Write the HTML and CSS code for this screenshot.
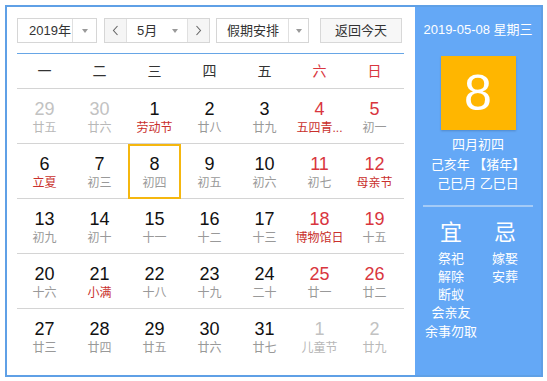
FILE: index.html
```html
<!DOCTYPE html>
<html lang="zh-CN">
<head>
<meta charset="utf-8">
<title>日历</title>
<link rel="stylesheet" href="styles.css">
</head>
<body>
<div class="cal">
  <div class="main">
    <div class="toolbar">
      <div class="select year">
        <span class="sel-text">2019年</span>
        <span class="sel-arrow"><i class="caret"></i></span>
      </div>
      <div class="month-group">
        <span class="nav nav-prev"><svg width="7" height="11" viewBox="0 0 7 11"><path d="M5.5 1 L1.5 5.5 L5.5 10" fill="none" stroke="#666" stroke-width="1.1"/></svg></span>
        <span class="m-text">5月</span>
        <span class="m-arrow"><i class="caret"></i></span>
        <span class="nav nav-next"><svg width="7" height="11" viewBox="0 0 7 11"><path d="M1.5 1 L5.5 5.5 L1.5 10" fill="none" stroke="#666" stroke-width="1.1"/></svg></span>
      </div>
      <div class="select holiday">
        <span class="sel-text">假期安排</span>
        <span class="sel-arrow"><i class="caret"></i></span>
      </div>
      <button class="today">返回今天</button>
    </div>

    <div class="weekdays">
      <span>一</span><span>二</span><span>三</span><span>四</span><span>五</span><span class="red">六</span><span class="red">日</span>
    </div>

    <div class="week">
      <div class="day other"><b>29</b><em>廿五</em></div>
      <div class="day other"><b>30</b><em>廿六</em></div>
      <div class="day"><b>1</b><em class="fest">劳动节</em></div>
      <div class="day"><b>2</b><em>廿八</em></div>
      <div class="day"><b>3</b><em>廿九</em></div>
      <div class="day rest"><b>4</b><em class="fest">五四青...</em></div>
      <div class="day rest"><b>5</b><em>初一</em></div>
    </div>
    <div class="week">
      <div class="day"><b>6</b><em class="fest">立夏</em></div>
      <div class="day"><b>7</b><em>初三</em></div>
      <div class="day selected"><b>8</b><em>初四</em></div>
      <div class="day"><b>9</b><em>初五</em></div>
      <div class="day"><b>10</b><em>初六</em></div>
      <div class="day rest"><b>11</b><em>初七</em></div>
      <div class="day rest"><b>12</b><em class="fest">母亲节</em></div>
    </div>
    <div class="week">
      <div class="day"><b>13</b><em>初九</em></div>
      <div class="day"><b>14</b><em>初十</em></div>
      <div class="day"><b>15</b><em>十一</em></div>
      <div class="day"><b>16</b><em>十二</em></div>
      <div class="day"><b>17</b><em>十三</em></div>
      <div class="day rest"><b>18</b><em class="fest">博物馆日</em></div>
      <div class="day rest"><b>19</b><em>十五</em></div>
    </div>
    <div class="week">
      <div class="day"><b>20</b><em>十六</em></div>
      <div class="day"><b>21</b><em class="fest">小满</em></div>
      <div class="day"><b>22</b><em>十八</em></div>
      <div class="day"><b>23</b><em>十九</em></div>
      <div class="day"><b>24</b><em>二十</em></div>
      <div class="day rest"><b>25</b><em>廿一</em></div>
      <div class="day rest"><b>26</b><em>廿二</em></div>
    </div>
    <div class="week last">
      <div class="day"><b>27</b><em>廿三</em></div>
      <div class="day"><b>28</b><em>廿四</em></div>
      <div class="day"><b>29</b><em>廿五</em></div>
      <div class="day"><b>30</b><em>廿六</em></div>
      <div class="day"><b>31</b><em>廿七</em></div>
      <div class="day other"><b>1</b><em>儿童节</em></div>
      <div class="day other"><b>2</b><em>廿九</em></div>
    </div>
  </div>

  <div class="panel">
    <div class="p-date">2019-05-08 星期三</div>
    <div class="p-big">8</div>
    <div class="p-lunar">
      <div>四月初四</div>
      <div>己亥年 【猪年】</div>
      <div>己巳月 乙巳日</div>
    </div>
    <div class="p-divider"></div>
    <div class="yiji">
      <div class="yj-col">
        <div class="yj-title">宜</div>
        <div class="yj-item">祭祀</div>
        <div class="yj-item">解除</div>
        <div class="yj-item">断蚁</div>
        <div class="yj-item">会亲友</div>
        <div class="yj-item">余事勿取</div>
      </div>
      <div class="yj-col">
        <div class="yj-title">忌</div>
        <div class="yj-item">嫁娶</div>
        <div class="yj-item">安葬</div>
      </div>
    </div>
  </div>
</div>
</body>
</html>
```

FILE: styles.css
```css
* { box-sizing: border-box; }

html, body {
  margin: 0;
  padding: 0;
  background: #fff;
}

body {
  font-family: "Liberation Sans", "Noto Sans CJK SC", sans-serif;
  color: #333;
}

.cal {
  margin: 5px 0 0 5px;
  width: 538px;
  height: 372px;
  border: 2px solid #5fa0e6;
  display: flex;
  background: #fff;
}

.main {
  width: 408px;
  padding: 11px 11px 0 10px;
}

/* toolbar */
.toolbar {
  display: flex;
  height: 25px;
  font-size: 13px;
  color: #333;
}

.select, .month-group {
  display: flex;
  height: 25px;
  border: 1px solid #d6d6d6;
  background: #fff;
}

.sel-text, .m-text {
  display: flex;
  align-items: center;
  line-height: 23px;
}

.sel-arrow, .m-arrow {
  display: flex;
  align-items: center;
  justify-content: center;
}

.caret {
  display: block;
  width: 0;
  height: 0;
  border-top: 4px solid #9a9a9a;
  border-left: 3.5px solid transparent;
  border-right: 3.5px solid transparent;
}

.year { width: 80px; }
.year .sel-text { width: 55px; padding-left: 11px; }
.year .sel-arrow { width: 24px; border-left: 1px solid #e0e0e0; }

.month-group { width: 106px; margin-left: 7px; }
.nav {
  width: 22px;
  display: flex;
  align-items: center;
  justify-content: center;
  background: #f5f5f5;
}
.nav-prev { border-right: 1px solid #e0e0e0; }
.nav-next { border-left: 1px solid #e0e0e0; }
.m-text { width: 36px; padding-left: 10px; }
.m-arrow { width: 24px; }

.holiday { width: 93px; margin-left: 6px; }
.holiday .sel-text { width: 71px; padding-left: 10px; }
.holiday .sel-arrow { width: 20px; border-left: 1px solid #e0e0e0; }

.today {
  margin-left: 11px;
  width: 82px;
  height: 25px;
  padding: 0;
  border: 1px solid #d8d8d8;
  background: #f7f7f7;
  font-family: inherit;
  font-size: 13px;
  color: #333;
  line-height: 23px;
}

/* weekday header */
.weekdays {
  margin-top: 10px;
  border-top: 1px solid #67a6e6;
  border-bottom: 1px solid #d4d4d4;
  display: grid;
  grid-template-columns: repeat(7, 55px);
  height: 36px;
  font-size: 14px;
  color: #333;
}
.weekdays span {
  text-align: center;
  line-height: 34px;
}
.weekdays .red { color: #d9363e; }

/* weeks */
.week {
  display: grid;
  grid-template-columns: repeat(7, 55px);
  height: 55px;
  border-bottom: 1px solid #d4d4d4;
}
.week.last { border-bottom: none; }

.day {
  position: relative;
  display: flex;
  flex-direction: column;
  align-items: center;
  padding-top: 10px;
}
.day b {
  font-weight: normal;
  font-size: 18px;
  line-height: 20px;
  color: #111;
}
.day em {
  font-style: normal;
  font-size: 12px;
  line-height: 16px;
  color: #999;
  margin-top: 1px;
  white-space: nowrap;
}
.day.rest b { color: #d9363e; }
.day em.fest { color: #c9302c; }
.day.other b { color: #c2c2c2; }
.day.other em { color: #b8b8b8; }

.day.selected::after {
  content: "";
  position: absolute;
  left: 1px;
  right: 1px;
  top: 0;
  bottom: -1px;
  border: 2px solid #f5b70f;
}

/* right panel */
.panel {
  width: 126px;
  background: #64a8f6;
  color: #fff;
  display: flex;
  flex-direction: column;
  align-items: center;
}

.p-date {
  margin-top: 15px;
  font-size: 13px;
  line-height: 16px;
  white-space: nowrap;
}

.p-big {
  margin-top: 18px;
  width: 75px;
  height: 74px;
  background: #ffb600;
  font-size: 50px;
  line-height: 74px;
  text-align: center;
  box-shadow: 0 1px 2px rgba(0, 0, 0, 0.18);
}

.p-lunar {
  margin-top: 5px;
  font-size: 13px;
  line-height: 19.5px;
  text-align: center;
}

.p-divider {
  margin-top: 11px;
  width: 110px;
  height: 2px;
  background: #a4cbf7;
}

.yiji {
  display: flex;
  margin-top: 13px;
}

.yj-col {
  width: 54px;
  display: flex;
  flex-direction: column;
  align-items: center;
}

.yj-title {
  font-size: 22px;
  line-height: 26px;
  margin-bottom: 4px;
}

.yj-item {
  font-size: 13px;
  line-height: 18.3px;
  white-space: nowrap;
}
```
